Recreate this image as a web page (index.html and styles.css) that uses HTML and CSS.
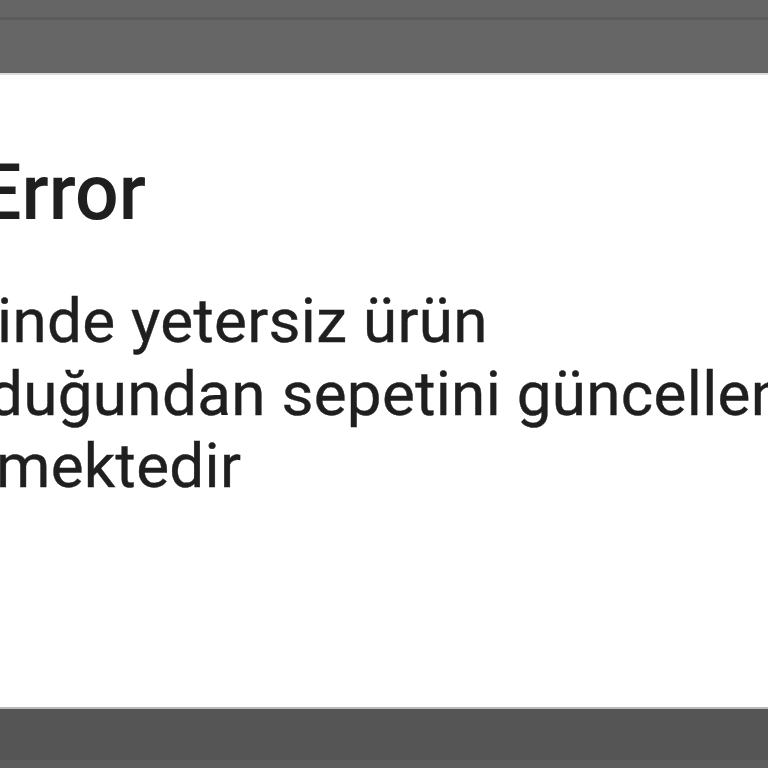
FILE: index.html
```html
<!DOCTYPE html>
<html lang="tr">
<head>
    <meta charset="UTF-8">
    <meta name="viewport" content="width=device-width, initial-scale=1.0">
    <title>Error</title>
    <link rel="stylesheet" href="styles.css">
</head>
<body>
    <!-- üst karartılmış alan -->
    <div class="scrim-top">
        <div class="scrim-strip"></div>
        <div class="scrim-line"></div>
        <div class="scrim-fill"></div>
    </div>

    <!-- uyarı penceresi -->
    <div class="dialog">
        <h2 class="dialog-title">Error</h2>
        <div class="dialog-message">
            <div class="msg-line line-1">inde yetersiz ürün</div>
            <div class="msg-line line-2">duğundan sepetini güncellen</div>
            <div class="msg-line line-3">mektedir</div>
        </div>
    </div>

    <!-- alt karartılmış alan -->
    <div class="scrim-bottom">
        <div class="scrim-fill-dark"></div>
        <div class="scrim-foot"></div>
    </div>
</body>
</html>
```

FILE: styles.css
```css
body {
    font-family: Roboto, "Noto Sans", sans-serif;
    background-color: #ffffff;
    margin: 0;
    padding: 0;
    width: 768px;
    height: 768px;
    overflow: hidden;
    display: flex;
    flex-direction: column;
}

.scrim-top {
    display: flex;
    flex-direction: column;
    flex-shrink: 0;
}

.scrim-strip {
    height: 17px;
    background-color: #656565;
}

.scrim-line {
    height: 3px;
    background-color: #5b5b5b;
}

.scrim-fill {
    height: 53px;
    background-color: #666666;
    border-bottom: 2px solid #dddddd;
}

.dialog {
    flex: 1;
    background-color: #ffffff;
    color: #1f1f1f;
    overflow: hidden;
    border-bottom: 2px solid #b9b9b9;
}

.dialog-title {
    margin: 80px 0 0 -22px;
    font-size: 77px;
    font-weight: 500;
    line-height: 77px;
}

.dialog-message {
    margin-top: 53px;
    font-size: 62px;
    line-height: 72.5px;
    letter-spacing: 0.3px;
    -webkit-text-stroke: 0.4px #1f1f1f;
}

.msg-line {
    white-space: nowrap;
}

.line-1 {
    margin-left: -3px;
}

.line-2 {
    margin-left: -12px;
}

.line-3 {
    margin-left: -4px;
}

.scrim-bottom {
    display: flex;
    flex-direction: column;
    flex-shrink: 0;
}

.scrim-fill-dark {
    height: 51px;
    background-color: #555555;
}

.scrim-foot {
    height: 8px;
    background-color: #5d5d5d;
}
```
